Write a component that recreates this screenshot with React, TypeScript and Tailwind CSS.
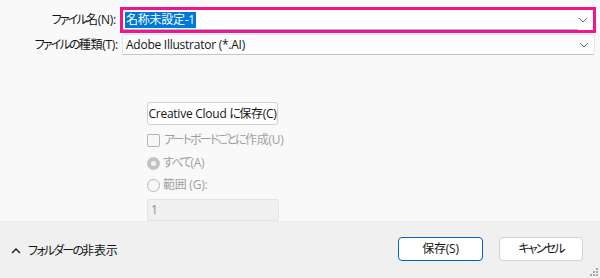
import React from "react";

const font = { fontFamily: '"Open Sans", "Noto Sans CJK JP", sans-serif' };

function T({ children }: { children: string }) {
  const parts = children.match(/[\u3040-\u30ff]+|[^\u3040-\u30ff]+/g) || [];
  return (
    <>
      {parts.map((p, i) =>
        /[\u3040-\u30ff]/.test(p) ? (
          <span key={i} className="tracking-[-1.8px]">{p}</span>
        ) : (
          <span key={i} className="tracking-[-0.25px]">{p}</span>
        )
      )}
    </>
  );
}

function Chevron({ className = "" }: { className?: string }) {
  return (
    <svg width="10" height="6" viewBox="0 0 10 6" className={className}>
      <path d="M1 1 L5 5 L9 1" fill="none" stroke="#6b6b6b" strokeWidth="1" />
    </svg>
  );
}

export default function App() {
  return (
    <div className="w-[600px] h-[278px] flex flex-col text-[12px] text-[#141414] overflow-hidden [font-feature-settings:'palt']" style={font}>
      <div className="h-[222px] bg-[#f9f9f9] flex flex-col border-b border-[#ececec]">
        <div className="flex items-center mt-[7px] h-[26px]">
          <div className="w-[117px] text-right pr-[1px] leading-none whitespace-nowrap"><T>ファイル名(N):</T></div>
          <div className="ml-[3px] w-[476px] h-[26px] border-[3px] border-[#f2148c] bg-white flex items-center">
            <div className="flex-1 h-full border-b border-[#8cc0e8] flex items-center pl-[2px]">
              <span className="bg-[#0078d7] text-white leading-[16px] px-[1px] text-[12px]"><T>名称未設定-1</T></span>
            </div>
            <Chevron className="mr-[5px]" />
          </div>
        </div>
        <div className="flex items-center mt-[1px] h-[21px]">
          <div className="w-[118px] text-right leading-none whitespace-nowrap"><T>ファイルの種類(T):</T></div>
          <div className="ml-[4px] w-[473px] h-[21px] bg-[#fdfdfd] border border-[#e5e5e5] border-b-[#c4c4c4] rounded-[2px] flex items-center pl-[3px]">
            <span className="flex-1 text-[12px]"><T>Adobe Illustrator (*.AI)</T></span>
            <Chevron className="mr-[5px]" />
          </div>
        </div>
        <div className="ml-[147px] mt-[47px] flex flex-col w-[132px]">
          <div className="h-[23px] w-[131px] bg-white border border-[#d0d0d0] rounded-[3px] flex items-center justify-center text-[12px] whitespace-nowrap">
            <T>{"Creative Cloud\u00a0に保存(C)"}</T>
          </div>
          <div className="flex items-center mt-[8px] h-[14px] text-[#a0a0a0] whitespace-nowrap">
            <span className="shrink-0 w-[13px] h-[13px] border border-[#b5b5b5] rounded-[2px] bg-[#f7f7f7] mr-[4px]" />
            <T>アートボードごとに作成(U)</T>
          </div>
          <div className="flex items-center mt-[7px] h-[18px] text-[#a0a0a0]">
            <span className="shrink-0 w-[13px] h-[13px] rounded-full bg-[#c3c3c3] flex items-center justify-center mr-[3px]">
              <span className="w-[5px] h-[5px] rounded-full bg-[#f3f3f3]" />
            </span>
            <T>すべて(A)</T>
          </div>
          <div className="flex items-center mt-[4px] h-[18px] text-[#a0a0a0]">
            <span className="shrink-0 w-[13px] h-[13px] rounded-full border border-[#b5b5b5] bg-[#f7f7f7] mr-[3px]" />
            <T>範囲 (G):</T>
          </div>
          <div className="mt-[5px] h-[22px] w-[132px] bg-[#f0f0f0] border border-[#e3e3e3] rounded-[2px] flex items-center pl-[3px] text-[#8a8a8a]">
            1
          </div>
        </div>
      </div>
      <div className="flex-1 bg-[#f0f0f0] flex items-center relative">
        <div className="flex items-center ml-[11px] mt-[1px]">
          <svg width="10" height="6" viewBox="0 0 10 6" className="mr-[7px]">
            <path d="M1 5 L5 1 L9 5" fill="none" stroke="#1a1a1a" strokeWidth="1.4" />
          </svg>
          <span><T>フォルダーの非表示</T></span>
        </div>
        <div className="ml-auto flex items-center mr-[17px] gap-[16px] mt-[-3px]">
          <div className="w-[85px] h-[24px] bg-white border border-[#0067c0] rounded-[4px] flex items-center justify-center">
            <T>保存(S)</T>
          </div>
          <div className="w-[84px] h-[24px] bg-white border border-[#d2d2d2] rounded-[4px] flex items-center justify-center">
            <T>キャンセル</T>
          </div>
        </div>
        <svg width="8" height="8" viewBox="0 0 8 8" className="absolute right-[2px] bottom-[2px]">
          <rect x="6" y="0" width="2" height="2" fill="#a8a8a8" />
          <rect x="3" y="3" width="2" height="2" fill="#a8a8a8" />
          <rect x="6" y="3" width="2" height="2" fill="#a8a8a8" />
          <rect x="0" y="6" width="2" height="2" fill="#a8a8a8" />
          <rect x="3" y="6" width="2" height="2" fill="#a8a8a8" />
          <rect x="6" y="6" width="2" height="2" fill="#a8a8a8" />
        </svg>
      </div>
    </div>
  );
}
